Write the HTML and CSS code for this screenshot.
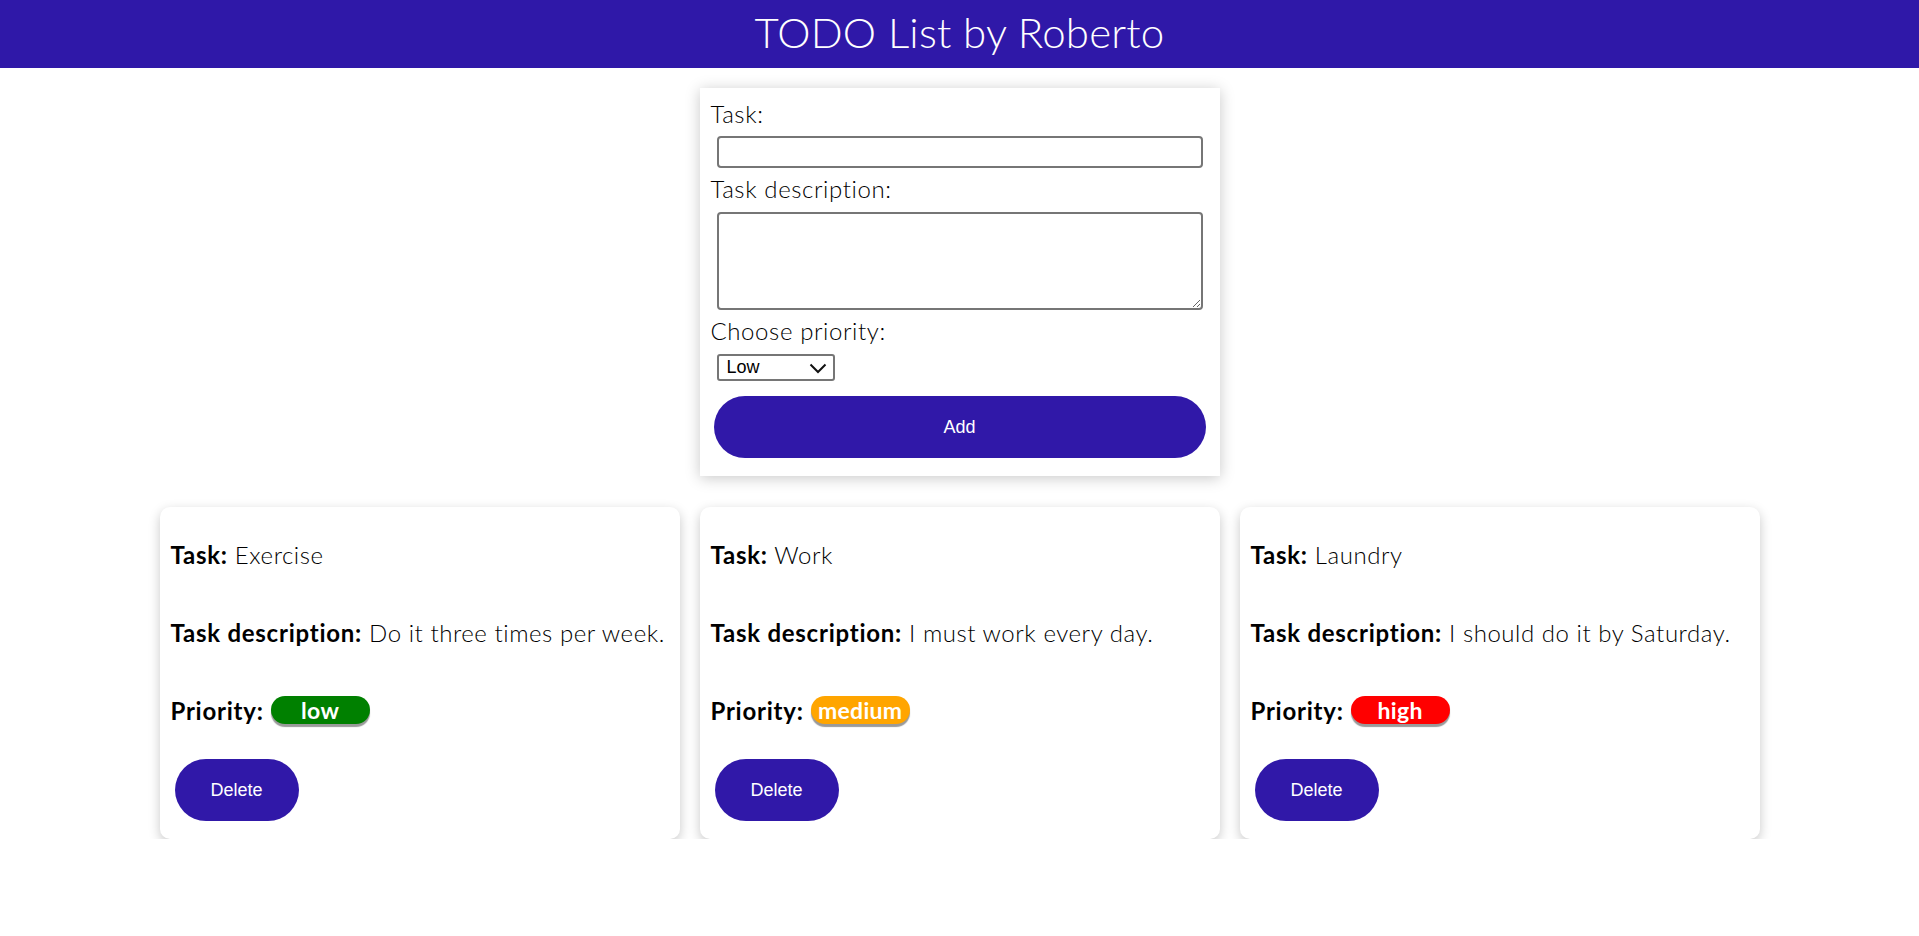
FILE: index.html
```html
<!DOCTYPE html>
<html lang="en">
<head>
<meta charset="utf-8">
<title>TODO List by Roberto</title>
<link rel="stylesheet" href="styles.css">
</head>
<body>
<header class="topbar">
  <h1 class="title">TODO List by Roberto</h1>
</header>
<main class="page">
  <form class="form-card">
    <label class="field-label" for="task">Task:</label>
    <input class="text-input" id="task" type="text">
    <label class="field-label" for="desc">Task description:</label>
    <textarea class="text-area" id="desc"></textarea>
    <label class="field-label" for="prio">Choose priority:</label>
    <span class="select-wrap">
      <select class="prio-select" id="prio">
        <option>Low</option>
        <option>Medium</option>
        <option>High</option>
      </select>
      <svg class="select-arrow" width="18" height="11" viewBox="0 0 18 11" aria-hidden="true">
        <path d="M1.5 1.5 L9 9 L16.5 1.5" fill="none" stroke="#111" stroke-width="2"/>
      </svg>
    </span>
    <button class="btn btn-add" type="button">Add</button>
  </form>

  <section class="task-list">
    <article class="task-card">
      <p class="task-line"><b>Task:</b> Exercise</p>
      <p class="task-line"><b>Task description:</b> Do it three times per week.</p>
      <p class="task-line"><b>Priority:</b> <span class="badge badge-low">low</span></p>
      <button class="btn btn-delete" type="button">Delete</button>
    </article>
    <article class="task-card">
      <p class="task-line"><b>Task:</b> Work</p>
      <p class="task-line"><b>Task description:</b> I must work every day.</p>
      <p class="task-line"><b>Priority:</b> <span class="badge badge-medium">medium</span></p>
      <button class="btn btn-delete" type="button">Delete</button>
    </article>
    <article class="task-card">
      <p class="task-line"><b>Task:</b> Laundry</p>
      <p class="task-line"><b>Task description:</b> I should do it by Saturday.</p>
      <p class="task-line"><b>Priority:</b> <span class="badge badge-high">high</span></p>
      <button class="btn btn-delete" type="button">Delete</button>
    </article>
  </section>
</main>
</body>
</html>
```

FILE: styles.css
```css
* { box-sizing: border-box; }

body {
  margin: 0;
  background: #ffffff;
  font-family: "Lato", "Open Sans", sans-serif;
  font-weight: 300;
  color: #000;
}

.topbar {
  height: 68px;
  background: #2f18a8;
  display: flex;
  align-items: center;
  justify-content: center;
}

.title {
  margin: 0;
  color: #ffffff;
  font-weight: 300;
  font-size: 42px;
  line-height: 1;
  padding-bottom: 4px;
  letter-spacing: 0.2px;
}

.page {
  display: flex;
  flex-direction: column;
  align-items: center;
  padding-top: 20px;
}

.form-card {
  width: 520px;
  background: #fff;
  box-shadow: 0 2px 14px rgba(0, 0, 0, 0.22);
  padding: 11px 14px 18px 11px;
  display: flex;
  flex-direction: column;
  align-items: flex-start;
}

.field-label {
  font-size: 24px;
  line-height: 30px;
  letter-spacing: 0.6px;
}

.text-input {
  margin: 7px 0 6px 6px;
  width: 486px;
  height: 32px;
  border: 2px solid #767676;
  border-radius: 4px;
  font-size: 16px;
}

.text-area {
  margin: 8px 0 6px 6px;
  width: 486px;
  height: 98px;
  border: 2px solid #767676;
  border-radius: 4px;
  font-size: 16px;
}

.select-wrap {
  position: relative;
  margin: 8px 0 15px 6px;
  display: block;
  width: 118px;
  height: 27px;
}

.prio-select {
  -webkit-appearance: none;
  appearance: none;
  display: block;
  width: 118px;
  height: 27px;
  border: 2px solid #767676;
  border-radius: 3px;
  padding: 0 0 0 8px;
  font-family: "Liberation Sans", Arial, sans-serif;
  font-size: 18px;
  line-height: 23px;
  background: #fff;
  color: #000;
}

.select-arrow {
  position: absolute;
  right: 8px;
  top: 9px;
  pointer-events: none;
}

.btn {
  border: none;
  background: #3018a8;
  color: #fff;
  font-family: "Liberation Sans", Arial, sans-serif;
  font-size: 18px;
  height: 62px;
  border-radius: 31px;
  cursor: pointer;
}

.btn-add {
  width: 492px;
  margin-left: 3px;
}

.task-list {
  margin-top: 31px;
  display: flex;
  gap: 20px;
}

.task-card {
  width: 520px;
  background: #fff;
  border-radius: 10px;
  box-shadow: 0 4px 12px rgba(0, 0, 0, 0.22);
  padding: 33px 11px 18px 11px;
}

.task-line {
  margin: 0 0 48px 0;
  font-size: 24px;
  line-height: 30px;
  letter-spacing: 0.55px;
}

.task-line:nth-of-type(3) {
  margin-bottom: 33px;
}

.task-line b {
  font-weight: 700;
  color: #000;
  letter-spacing: 0.75px;
}

.badge {
  display: inline-block;
  width: 99px;
  height: 28px;
  line-height: 28px;
  border-radius: 14px;
  text-align: center;
  color: #fff;
  font-weight: 700;
  font-size: 23px;
  letter-spacing: 0.3px;
  vertical-align: 1px;
  box-shadow: 0 3px 1px #9a9a9a;
}

.badge-low { background: #008000; }
.badge-medium { background: #ffa500; }
.badge-high { background: #ff0000; }

.btn-delete {
  width: 124px;
  margin-left: 4px;
}
```
